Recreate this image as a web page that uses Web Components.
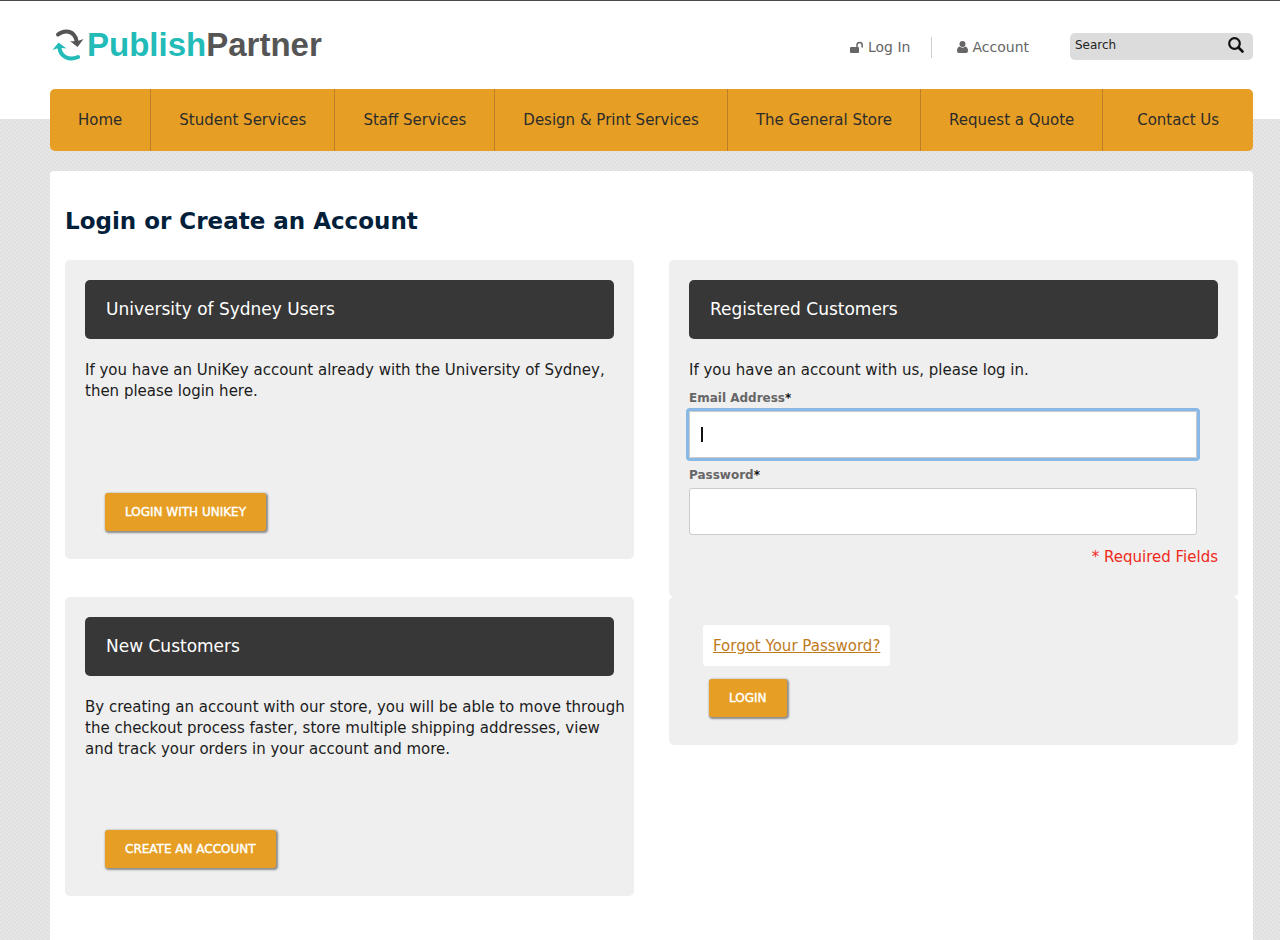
<!DOCTYPE html>
<html lang="en">
<head>
<meta charset="utf-8">
<meta name="viewport" content="width=device-width, initial-scale=1">
<title>Customer Login - PublishPartner</title>
<style>
  body {
    --accent: #e69f24;
    --card: #efefef;
    --dark: #373737;
    color: #1c1c1c;
    font: 15px/21px Verdana, "DejaVu Sans", sans-serif;
    margin: 0;
  }
</style>
</head>
<body>
<shop-page>
  <shop-header slot="header"></shop-header>
  <shop-nav slot="nav">
    <a href="#home">Home</a>
    <a href="#student">Student Services</a>
    <a href="#staff">Staff Services</a>
    <a href="#design">Design &amp; Print Services</a>
    <a href="#store">The General Store</a>
    <a href="#quote">Request a Quote</a>
    <a href="#contact">Contact Us</a>
  </shop-nav>
  <login-panel></login-panel>
</shop-page>

<script>
/**
 * Page frame: striped backdrop, header, nav and content sheet
 */
class ShopPage extends HTMLElement {
  constructor() {
    super();
    this.attachShadow( {mode:'open'} );
    this.shadowRoot.innerHTML = `
      <style>
        :host {
          background:
            linear-gradient(#fff, #fff) 0 0 / 100% 118px no-repeat,
            linear-gradient(45deg, #dfdfdf 25%, #e7e7e7 25% 50%, #dfdfdf 50% 75%, #e7e7e7 75%) 0 0 / 4px 4px;
          border-top: 1px solid #4a4a4a;
          box-sizing: border-box;
          display: flex;
          flex-direction: column;
          min-height: 100vh;
          padding: 0 27px 0 50px;
        }

        main {
          background: white;
          border-radius: 4px 4px 0 0;
          flex: 1;
          margin-top: 20px;
          padding: 33px 15px 40px;
        }
      </style>
      <slot name="header"></slot>
      <slot name="nav"></slot>
      <main><slot></slot></main>
    `;
  }
}

class ShopHeader extends HTMLElement {
  constructor() {
    super();
    this.attachShadow( {mode:'open'} );
    this.shadowRoot.innerHTML = `
      <style>
        :host {
          align-items: center;
          color: #666;
          display: flex;
          font-size: 14px;
          height: 88px;
        }

        a {
          align-items: center;
          color: inherit;
          display: flex;
          gap: 4px;
          text-decoration: none;
        }

        .logo {
          color: #555;
          font: bold 33px/40px Arial, "Liberation Sans", sans-serif;
          gap: 3px;
          margin: 0 auto 0 2px;
        }

        .logo b { color: #22bbb8; }

        .links {
          align-items: center;
          display: flex;
          margin: 4px 41px 0 0;
        }

        .links a + a {
          border-left: 1px solid #ccc;
          margin-left: 21px;
          padding-left: 25px;
        }

        form {
          align-items: center;
          background: #dcdcdc;
          border-radius: 5px;
          box-sizing: border-box;
          display: flex;
          height: 27px;
          margin-top: 3px;
          padding: 0 9px 3px 5px;
          width: 183px;
        }

        input {
          background: none;
          border: 0;
          color: #222;
          flex: 1;
          font: 12px/16px Verdana, "DejaVu Sans", sans-serif;
          min-width: 0;
          outline: 0;
          padding: 0;
        }

        input::placeholder { color: #222; opacity: 1; }

        button {
          background: none;
          border: 0;
          color: #111;
          display: flex;
          padding: 0;
        }
      </style>

      <a class="logo" href="#home">
        <svg width="32" height="34" viewBox="0 0 32 34" fill="none" stroke-width="4" stroke-linecap="round" aria-hidden="true">
          <path stroke="#555" d="M6 6.500C12 1.500 22.500 2 24.500 13"/>
          <path fill="#555" d="M18 13Q25 14 31.500 11L25.500 19z"/>
          <path stroke="#22bbb8" d="M26 29C17 33 8.500 28.500 7.500 20"/>
          <path fill="#22bbb8" d="M.500 22L6.500 14.500L14.500 20.500Q7 19 .500 22z"/>
        </svg>
        <span><b>Publish</b>Partner</span>
      </a>

      <div class="links">
        <a href="#login">
          <svg width="14" height="13" viewBox="0 0 14 13" aria-hidden="true">
            <rect y="6" width="9" height="6" rx="1" fill="currentColor"/>
            <path d="M7 6.500V4a2.600 2.600 0 0 1 5.200 0v2" fill="none" stroke="currentColor" stroke-width="1.500" stroke-linecap="round"/>
          </svg>
          Log In
        </a>
        <a href="#account">
          <svg width="11" height="12" viewBox="0 0 11 12" fill="currentColor" aria-hidden="true">
            <circle cx="5.500" cy="3" r="3"/>
            <path d="M2.500 5.500C4 7 7 7 8.500 5.500C10.500 6 11 8 11 10Q11 12 9 12H2Q0 12 0 10C0 8 .500 6 2.500 5.500z"/>
          </svg>
          Account
        </a>
      </div>

      <form>
        <input type="text" aria-label="Search" placeholder="Search">
        <button type="button" aria-label="Go">
          <svg width="16" height="16" viewBox="0 0 16 16" fill="none" stroke="currentColor" aria-hidden="true">
            <circle cx="6.500" cy="6.500" r="5.300" stroke-width="2.200"/>
            <path d="M10.500 10.500l4 4" stroke-width="2.600" stroke-linecap="round"/>
          </svg>
        </button>
      </form>
    `;
  }
}

class ShopNav extends HTMLElement {
  constructor() {
    super();
    this.attachShadow( {mode:'open'} );
    this.shadowRoot.innerHTML = `
      <style>
        :host { display: block; }

        nav {
          background: var(--accent);
          border-radius: 5px;
          display: flex;
        }

        ::slotted(a) {
          border-left: 1px solid #bd7d2b;
          color: #2c2c2c;
          padding: 21px 28px 20px;
          text-align: center;
          text-decoration: none;
          white-space: nowrap;
        }

        ::slotted(a:first-child) { border-left: 0; }
        ::slotted(a:last-child) { flex: 1; }
      </style>
      <nav><slot></slot></nav>
    `;
  }
}

/**
 * Grey box. Attribute "heading" draws the dark title bar
 */
class ShopCard extends HTMLElement {
  constructor() {
    super();
    this.attachShadow( {mode:'open'} );
  }

  connectedCallback() {
    const heading = this.getAttribute('heading');
    this.shadowRoot.innerHTML = `
      <style>
        :host {
          background: var(--card);
          border-radius: 5px;
          box-sizing: border-box;
          display: flex;
          flex-direction: column;
          padding: 20px;
        }

        h2 {
          background: var(--dark);
          border-radius: 5px;
          color: white;
          font-size: 17px;
          font-weight: normal;
          line-height: 21px;
          margin: 0 0 21px;
          padding: 19px 21px;
        }

        .actions { margin: auto 0 8px 20px; }
      </style>
      ${heading ? `<h2>${heading}</h2>` : ''}
      <slot></slot>
      <div class="actions"><slot name="actions"></slot></div>
    `;
  }
}

class ShopButton extends HTMLElement {
  constructor() {
    super();
    this.attachShadow( {mode:'open'} );
    this.shadowRoot.innerHTML = `
      <style>
        :host { display: inline-block; vertical-align: top; }

        button {
          background: var(--accent);
          border: 0;
          border-radius: 3px;
          box-shadow: 1px 1px 2px 1px #8c8c8c;
          color: white;
          cursor: pointer;
          font: 12px/18px Verdana, "DejaVu Sans", sans-serif;
          padding: 10px 20px;
          text-transform: uppercase;
          -webkit-text-stroke: .4px white;
        }
      </style>
      <button type="button"><slot></slot></button>
    `;
  }
}

/**
 * Labelled text box. Attribute "active" shows the focus ring and the caret
 */
class ShopField extends HTMLElement {
  constructor() {
    super();
    this.attachShadow( {mode:'open'} );
  }

  connectedCallback() {
    this.shadowRoot.innerHTML = `
      <style>
        :host {
          display: block;
          margin-right: 21px;
        }

        label {
          color: #666;
          display: block;
          font-size: 12px;
          font-weight: bold;
          line-height: 16px;
          padding: 9px 0 5px;
        }

        em { color: #111; font-style: normal; }

        .box { position: relative; }

        input {
          border: 1px solid #ccc;
          border-radius: 3px;
          box-sizing: border-box;
          display: block;
          font: inherit;
          height: 47px;
          padding: 0 12px;
          width: 100%;
        }

        input:focus,
        :host([active]) input {
          border-radius: 1px;
          outline: 3px solid #88b8e6;
        }

        i { display: none; }

        :host([active]) i {
          background: #111;
          display: block;
          height: 15px;
          left: 12px;
          position: absolute;
          top: 16px;
          width: 2px;
        }
      </style>
      <label for="input">${this.getAttribute('label')}<em>*</em></label>
      <div class="box">
        <input id="input" type="${this.getAttribute('type')}">
        <i></i>
      </div>
    `;
  }
}

class LoginPanel extends HTMLElement {
  constructor() {
    super();
    this.attachShadow( {mode:'open'} );
    this.shadowRoot.innerHTML = `
      <style>
        :host { display: block; }

        h1 {
          color: #03203a;
          font-size: 23px;
          line-height: 34px;
          margin: 0 0 22px;
        }

        p { margin: 0; }

        .columns {
          align-items: start;
          display: grid;
          gap: 35px;
          grid-template-columns: 1fr 1fr;
        }

        .column { display: grid; }
        .column.users { gap: 38px; }
        .users shop-card { min-height: 299px; }
        .users p { margin-right: -12px; }
        .register { min-height: 337px; }

        .required {
          color: #ee2a1c;
          padding-top: 12px;
          text-align: right;
        }

        .forgot {
          align-self: start;
          background: white;
          border-radius: 3px;
          color: #c07a1c;
          margin: 8px 14px 13px;
          padding: 11px 10px 9px;
        }
      </style>

      <h1>Login or Create an Account</h1>
      <div class="columns">
        <div class="column users">
          <shop-card heading="University of Sydney Users">
            <p>If you have an UniKey account already with the University of Sydney, then please login here.</p>
            <shop-button slot="actions">Login with UniKey</shop-button>
          </shop-card>
          <shop-card heading="New Customers">
            <p>By creating an account with our store, you will be able to move through the checkout process faster, store multiple shipping addresses, view and track your orders in your account and more.</p>
            <shop-button slot="actions">Create an Account</shop-button>
          </shop-card>
        </div>
        <div class="column">
          <shop-card class="register" heading="Registered Customers">
            <p>If you have an account with us, please log in.</p>
            <shop-field label="Email Address" type="email" active></shop-field>
            <shop-field label="Password" type="password"></shop-field>
            <p class="required">* Required Fields</p>
          </shop-card>
          <shop-card>
            <a class="forgot" href="#forgot">Forgot Your Password?</a>
            <shop-button slot="actions">Login</shop-button>
          </shop-card>
        </div>
      </div>
    `;
  }
}

customElements.define('shop-page', ShopPage);
customElements.define('shop-header', ShopHeader);
customElements.define('shop-nav', ShopNav);
customElements.define('shop-card', ShopCard);
customElements.define('shop-button', ShopButton);
customElements.define('shop-field', ShopField);
customElements.define('login-panel', LoginPanel);
</script>
</body>
</html>
